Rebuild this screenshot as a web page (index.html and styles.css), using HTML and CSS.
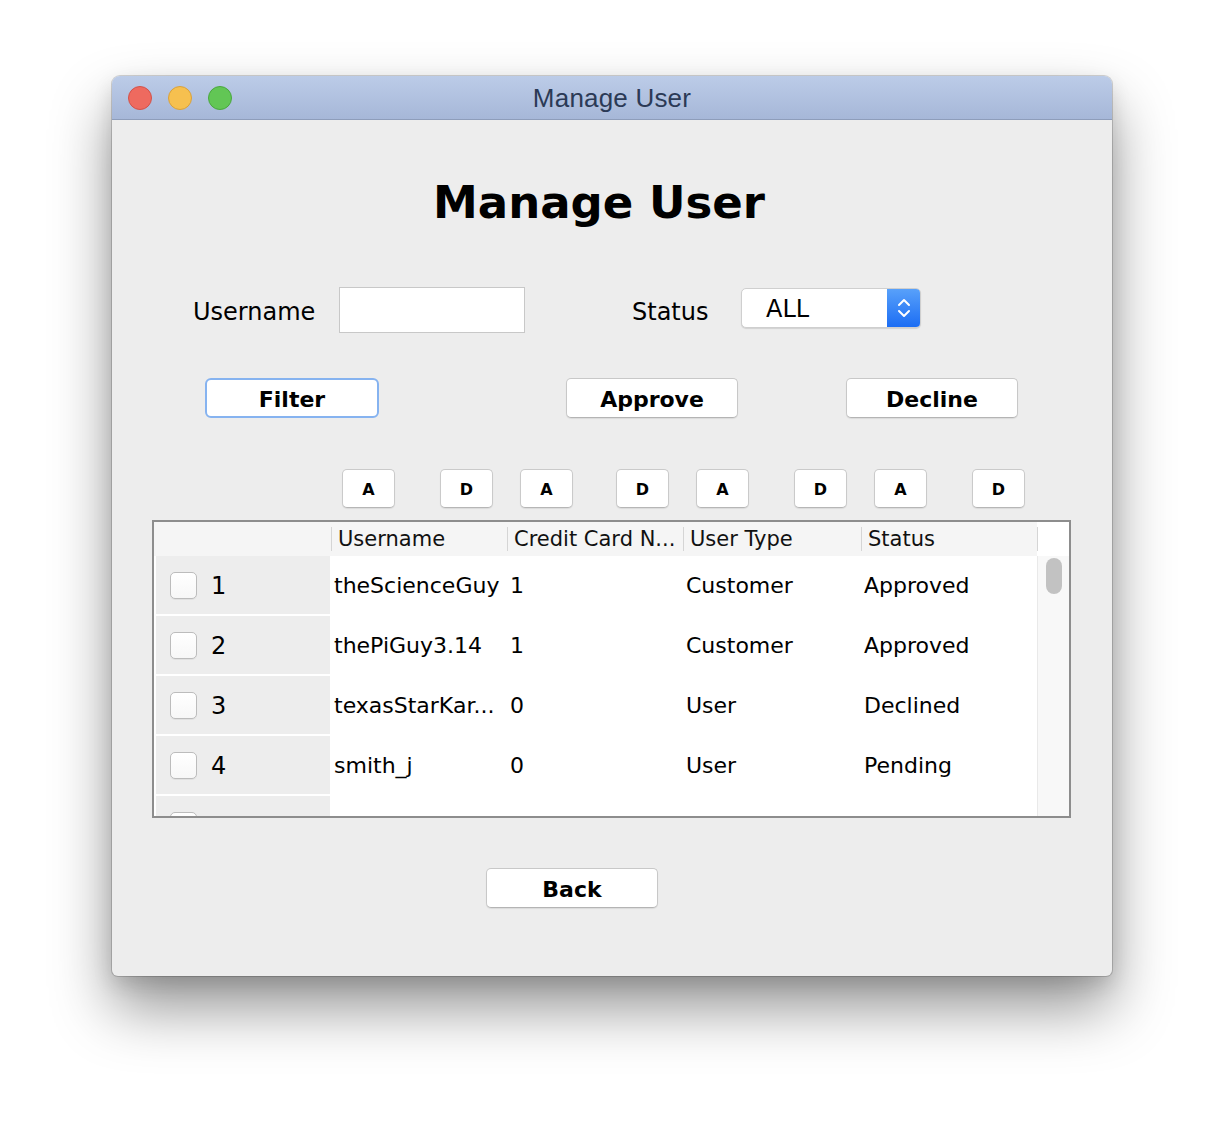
FILE: index.html
```html
<!DOCTYPE html>
<html>
<head>
<meta charset="utf-8">
<title>Manage User</title>
<link rel="stylesheet" href="styles.css">
</head>
<body>
<div class="window">
  <div class="titlebar">
    <div class="lights">
      <span class="light red"></span>
      <span class="light yellow"></span>
      <span class="light green"></span>
    </div>
    <div class="wtitle">Manage User</div>
    <div></div>
  </div>
  <div class="content">
    <h1 class="heading">Manage User</h1>

    <div class="row-form">
      <label class="lbl lbl-user">Username</label>
      <div class="input"></div>
      <label class="lbl lbl-status">Status</label>
      <div class="combo">
        <span class="combo-text">ALL</span>
        <span class="combo-arrows">
          <svg width="16" height="28" viewBox="0 0 16 28">
            <path d="M3 11 L8 6 L13 11" fill="none" stroke="#fff" stroke-width="2" stroke-linecap="round" stroke-linejoin="round"/>
            <path d="M3 17 L8 22 L13 17" fill="none" stroke="#fff" stroke-width="2" stroke-linecap="round" stroke-linejoin="round"/>
          </svg>
        </span>
      </div>
    </div>

    <div class="row-actions">
      <button class="btn btn-filter">Filter</button>
      <button class="btn btn-approve">Approve</button>
      <button class="btn btn-decline">Decline</button>
    </div>

    <div class="row-sort">
      <button class="sbtn s1">A</button>
      <button class="sbtn s2">D</button>
      <button class="sbtn s3">A</button>
      <button class="sbtn s4">D</button>
      <button class="sbtn s5">A</button>
      <button class="sbtn s6">D</button>
      <button class="sbtn s7">A</button>
      <button class="sbtn s8">D</button>
    </div>

    <div class="table">
      <div class="thead">
        <div class="th th-corner"></div>
        <div class="th"><span>Username</span></div>
        <div class="th"><span>Credit Card N...</span></div>
        <div class="th"><span>User Type</span></div>
        <div class="th"><span>Status</span></div>
        <div class="th th-end"><span></span></div>
      </div>
      <div class="tbody">
        <div class="rows">
          <div class="tr">
            <div class="rh"><span class="cb"></span><span class="num">1</span></div>
            <div class="td">theScienceGuy</div>
            <div class="td">1</div>
            <div class="td">Customer</div>
            <div class="td">Approved</div>
          </div>
          <div class="tr">
            <div class="rh"><span class="cb"></span><span class="num">2</span></div>
            <div class="td">thePiGuy3.14</div>
            <div class="td">1</div>
            <div class="td">Customer</div>
            <div class="td">Approved</div>
          </div>
          <div class="tr">
            <div class="rh"><span class="cb"></span><span class="num">3</span></div>
            <div class="td">texasStarKar...</div>
            <div class="td">0</div>
            <div class="td">User</div>
            <div class="td">Declined</div>
          </div>
          <div class="tr">
            <div class="rh"><span class="cb"></span><span class="num">4</span></div>
            <div class="td">smith_j</div>
            <div class="td">0</div>
            <div class="td">User</div>
            <div class="td">Pending</div>
          </div>
          <div class="tr">
            <div class="rh"><span class="cb"></span><span class="num">5</span></div>
            <div class="td"></div>
            <div class="td"></div>
            <div class="td"></div>
            <div class="td">Pending</div>
          </div>
        </div>
        <div class="scrollbar"><div class="thumb"></div></div>
      </div>
    </div>

    <button class="btn btn-back">Back</button>
  </div>
</div>
</body>
</html>
```

FILE: styles.css
```css
html, body {
  margin: 0;
  padding: 0;
  background: #ffffff;
}
body {
  width: 1224px;
  height: 1124px;
  overflow: hidden;
  padding: 76px 0 0 112px;
  box-sizing: border-box;
  font-family: "DejaVu Sans", "Liberation Sans", sans-serif;
  color: #000;
}
.window {
  width: 1000px;
  height: 900px;
  border-radius: 8px 8px 6px 6px;
  overflow: hidden;
  box-shadow: 0 0 0 1px rgba(0,0,0,0.16), 0 32px 60px rgba(0,0,0,0.42), 0 8px 20px rgba(0,0,0,0.12);
  background: #ededed;
}
.titlebar {
  height: 43px;
  border-bottom: 1px solid #8e9dba;
  background: linear-gradient(#bccce8, #a6b7d8);
  display: grid;
  grid-template-columns: 1fr auto 1fr;
  align-items: center;
}
.lights {
  display: flex;
  gap: 16px;
  padding-left: 16px;
}
.light {
  width: 24px;
  height: 24px;
  border-radius: 50%;
  box-sizing: border-box;
}
.red { background: #ee6a5f; border: 1px solid #d2524a; }
.yellow { background: #f6c04f; border: 1px solid #d9a13b; }
.green { background: #62c655; border: 1px solid #4aa73f; }
.wtitle {
  font-family: "Liberation Sans", Arial, sans-serif;
  font-size: 26px;
  color: #2b3a56;
  letter-spacing: 0.2px;
  padding-top: 2px;
}
.content {
  height: 856px;
  display: flex;
  flex-direction: column;
  align-items: flex-start;
}
.heading {
  margin: 53px 0 0 0;
  width: 974px;
  padding-right: 26px;
  height: 60px;
  line-height: 60px;
  text-align: center;
  font-size: 45px;
  font-weight: bold;
}
.row-form {
  margin-top: 54px;
  height: 46px;
  display: flex;
  align-items: flex-start;
}
.lbl {
  font-size: 24px;
  line-height: 46px;
  height: 46px;
  padding-top: 2px;
  box-sizing: border-box;
}
.lbl-user {
  margin-left: 81px;
  width: 146px;
}
.input {
  width: 186px;
  height: 46px;
  box-sizing: border-box;
  background: #fff;
  border: 1px solid #c8c8c8;
}
.lbl-status {
  margin-left: 107px;
  width: 109px;
}
.combo {
  margin-top: 1px;
  width: 180px;
  height: 40px;
  box-sizing: border-box;
  background: #fff;
  border: 1px solid #cfcfcf;
  border-radius: 5px;
  box-shadow: 0 1px 1px rgba(0,0,0,0.12);
  display: flex;
  align-items: center;
  overflow: hidden;
}
.combo-text {
  flex: 1;
  padding-left: 24px;
  padding-top: 1px;
  font-size: 24px;
}
.combo-arrows {
  width: 33px;
  height: 40px;
  background: linear-gradient(#5aa2fa, #1a6cf4);
  display: flex;
  align-items: center;
  justify-content: center;
}
.btn {
  height: 40px;
  box-sizing: border-box;
  background: #fff;
  border: 1px solid #c8c8c8;
  border-bottom-color: #b4b4b4;
  border-radius: 5px;
  box-shadow: 0 1px 1px rgba(0,0,0,0.08);
  font-family: "DejaVu Sans", sans-serif;
  font-weight: bold;
  font-size: 22px;
  color: #000;
  padding: 2px 0 0 0;
}
.row-actions {
  margin-top: 45px;
  display: flex;
  height: 40px;
}
.btn-filter {
  margin-left: 93px;
  width: 174px;
  border: 2px solid #86b3f0;
  border-radius: 6px;
  box-shadow: none;
}
.btn-approve {
  margin-left: 187px;
  width: 172px;
}
.btn-decline {
  margin-left: 108px;
  width: 172px;
}
.row-sort {
  margin-top: 51px;
  display: flex;
  height: 39px;
}
.sbtn {
  width: 53px;
  height: 39px;
  box-sizing: border-box;
  background: #fff;
  border: 1px solid #cacaca;
  border-bottom-color: #b6b6b6;
  border-radius: 5px;
  box-shadow: 0 1px 1px rgba(0,0,0,0.08);
  font-family: "DejaVu Sans", sans-serif;
  font-weight: bold;
  font-size: 16px;
  color: #000;
  padding: 2px 0 0 0;
}
.s1 { margin-left: 230px; }
.s2 { margin-left: 45px; }
.s3 { margin-left: 27px; }
.s4 { margin-left: 43px; }
.s5 { margin-left: 27px; }
.s6 { margin-left: 45px; }
.s7 { margin-left: 27px; }
.s8 { margin-left: 45px; }
.table {
  margin-top: 12px;
  margin-left: 40px;
  width: 919px;
  height: 298px;
  box-sizing: border-box;
  border: 2px solid #8d8d8d;
  background: #fff;
  display: flex;
  flex-direction: column;
}
.thead {
  height: 34px;
  display: grid;
  grid-template-columns: 177px 176px 176px 178px 176px 32px;
}
.th {
  background: #f5f5f5;
  display: flex;
  align-items: center;
  font-size: 21px;
  color: #111;
}
.th span {
  display: block;
  height: 24px;
  line-height: 24px;
  border-left: 1px solid #d5d5d5;
  padding-left: 6px;
  white-space: nowrap;
  overflow: hidden;
  flex: 1;
}
.th-end {
  background: #fff;
}
.th-end span { flex: 0 0 0; padding: 0; }
.tbody {
  height: 260px;
  display: flex;
  overflow: hidden;
}
.rows {
  width: 883px;
  height: 260px;
  overflow: hidden;
}
.tr {
  height: 60px;
  display: grid;
  grid-template-columns: 177px 176px 176px 178px 176px;
}
.rh {
  margin: 0 1px 2px 2px;
  background: #ededed;
  display: flex;
  align-items: center;
}
.cb {
  margin-left: 14px;
  width: 27px;
  height: 27px;
  box-sizing: border-box;
  border: 1px solid #bcbcbc;
  border-radius: 5px;
  background: linear-gradient(#ffffff, #f7f7f7);
  box-shadow: 0 1px 0 rgba(0,0,0,0.05);
}
.num {
  margin-left: 14px;
  padding-top: 2px;
  font-size: 24px;
}
.td {
  padding: 1px 0 0 3px;
  height: 58px;
  line-height: 58px;
  font-size: 22px;
  white-space: nowrap;
  overflow: hidden;
}
.scrollbar {
  width: 32px;
  height: 260px;
  box-sizing: border-box;
  background: #f8f8f8;
  border-left: 1px solid #e9e9e9;
  margin-left: 1px;
}
.thumb {
  margin: 2px 0 0 8px;
  width: 16px;
  height: 36px;
  border-radius: 8px;
  background: #c2c2c2;
}
.btn-back {
  margin-top: 50px;
  margin-left: 374px;
  width: 172px;
}
```
